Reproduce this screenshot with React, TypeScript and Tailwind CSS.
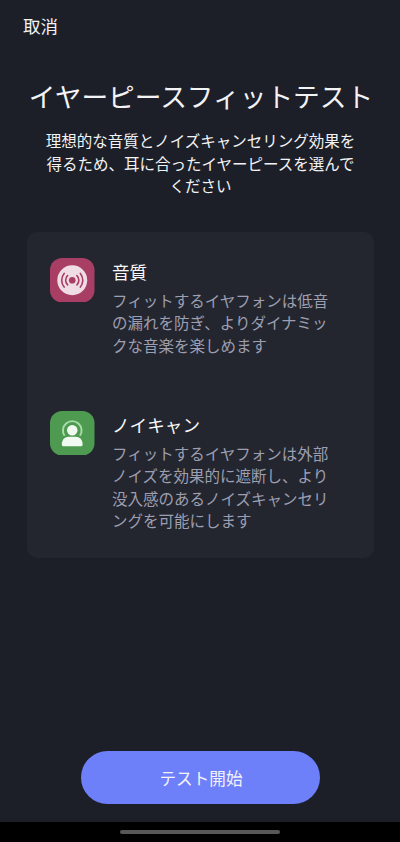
import type { ReactNode } from "react"

interface BenefitProps {
  icon: ReactNode
  title: string
  lines: string[]
}

function SoundIcon() {
  return (
    <svg viewBox="0 0 44 44" className="size-[44.5px] shrink-0" fill="none">
      <rect width="44" height="44" rx="12" fill="#a93e65" />
      <circle cx="22" cy="22" r="14.8" fill="#f0dce4" />
      <circle cx="22" cy="22" r="3.3" fill="#a93e65" />
      <path
        d="M17.4 17.4a6.5 6.5 0 0 0 0 9.2M26.6 17.4a6.5 6.5 0 0 1 0 9.2M14 15.3a10.4 10.4 0 0 0 0 13.4M30 15.3a10.4 10.4 0 0 1 0 13.4"
        stroke="#a93e65"
        strokeWidth="1.6"
        strokeLinecap="round"
      />
    </svg>
  )
}

function NoiseIcon() {
  return (
    <svg viewBox="0 0 44 44" className="size-[44.5px] shrink-0" fill="none">
      <rect width="44" height="44" rx="12" fill="#4e9a51" />
      <path
        d="M14.4 24.4a9.2 9.2 0 1 1 15.2 0"
        stroke="#a8dcaa"
        strokeWidth="1.9"
      />
      <circle cx="22" cy="19.1" r="5.2" fill="#f0faf0" />
      <path
        d="M11.7 33c0-4.6 2.8-7.6 7-7.6h6.6c4.2 0 7 3 7 7.6 0 1.2-.7 1.8-1.8 1.8h-17c-1.1 0-1.8-.6-1.8-1.8z"
        fill="#f0faf0"
      />
    </svg>
  )
}

function Benefit({ icon, title, lines }: BenefitProps) {
  return (
    <section className="flex gap-[17.5px]">
      {icon}
      <div>
        <h2 className="mt-0.5 text-[17.6px] leading-6 text-[#f8f8fa]">{title}</h2>
        <p className="mt-[5px] text-[15.5px] leading-[22.5px] whitespace-nowrap text-[#9d9eb1]">
          {lines.map((line) => (
            <span key={line} className="block">
              {line}
            </span>
          ))}
        </p>
      </div>
    </section>
  )
}

export default function App() {
  return (
    <main className="flex h-[842px] w-[400px] flex-col overflow-hidden bg-[#1c1f28] font-['Noto_Sans_CJK_JP',sans-serif] text-[#f3f3f6]">
      <header className="px-[23px] pt-[14px]">
        <button type="button" className="block text-[17.5px] leading-6">
          取消
        </button>
      </header>

      <h1 className="mt-[39px] flex justify-center pl-[2px] text-[26.7px] leading-[38px] whitespace-nowrap">
        イヤーピースフィットテスト
      </h1>
      <p className="mt-[14px] pl-px text-center text-[15.5px] leading-[22.5px]">
        理想的な音質とノイズキャンセリング効果を
        <br />
        得るため、耳に合ったイヤーピースを選んで
        <br />
        ください
      </p>

      <div className="mr-[26px] ml-[27px] mt-[35px] flex h-[326px] flex-col gap-[54.5px] rounded-[10px] bg-[#23262f] px-[23px] pt-[26px]">
        <Benefit
          icon={<SoundIcon />}
          title="音質"
          lines={["フィットするイヤフォンは低音", "の漏れを防ぎ、よりダイナミッ", "クな音楽を楽しめます"]}
        />
        <Benefit
          icon={<NoiseIcon />}
          title="ノイキャン"
          lines={["フィットするイヤフォンは外部", "ノイズを効果的に遮断し、より", "没入感のあるノイズキャンセリ", "ングを可能にします"]}
        />
      </div>

      <button
        type="button"
        className="mx-auto mt-auto mb-[18px] h-[53px] w-[239px] shrink-0 rounded-full bg-[#6e7ffa] pt-0.5 pl-0.5 text-[16.6px]"
      >
        テスト開始
      </button>
      <div className="flex h-5 shrink-0 items-center justify-center bg-black">
        <div className="h-1 w-40 rounded-full bg-[#575757]" />
      </div>
    </main>
  )
}
